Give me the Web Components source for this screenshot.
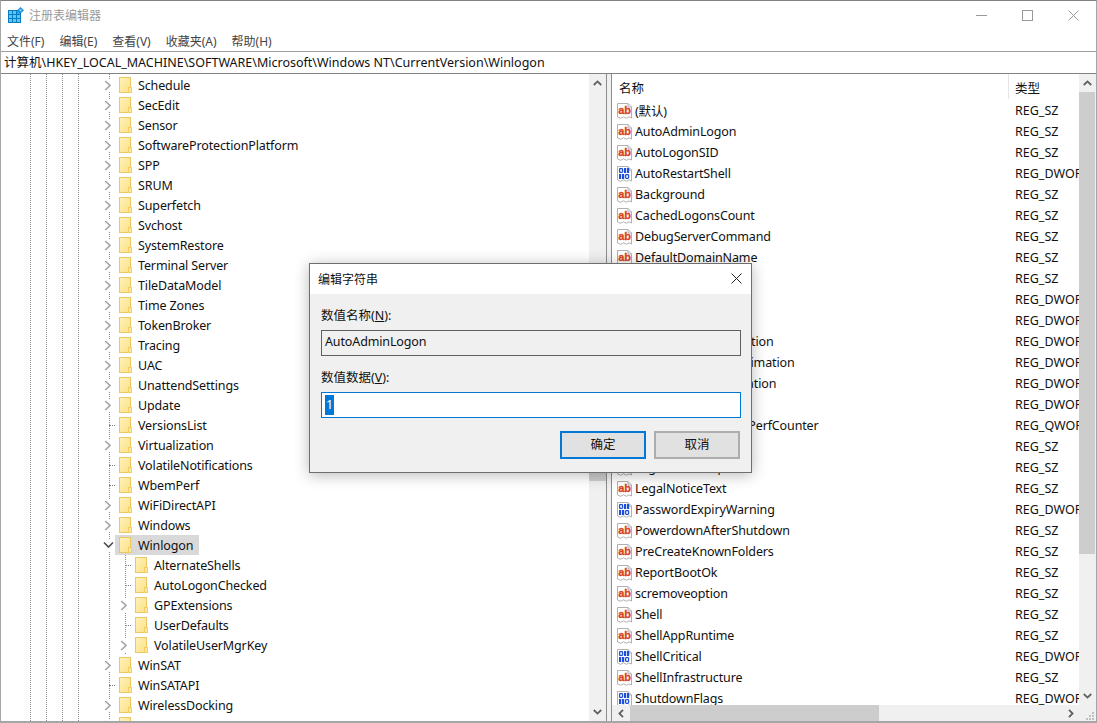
<!DOCTYPE html>
<html lang="zh">
<head>
<meta charset="utf-8">
<title>注册表编辑器</title>
<style>
    html, body {
        margin: 0;
        padding: 0;
        background: #fff;
        overflow: hidden;
    }
</style>
</head>
<body>
<reg-window></reg-window>

<script>
const FONT = `"Noto Sans", "Noto Sans CJK SC", sans-serif`;

const chevrons = {
    right: `<svg width="8" height="11" viewBox="0 0 8 11"><path d="M1.2 1 L6 5.5 L1.2 10" fill="none" stroke="#a6a6a6" stroke-width="1.7"/></svg>`,
    down: `<svg width="11" height="8" viewBox="0 0 11 8"><path d="M1 1.5 L5.5 6 L10 1.5" fill="none" stroke="#505050" stroke-width="1.7"/></svg>`,
    barUp: `<svg width="9" height="6" viewBox="0 0 9 6"><path d="M.8 5 L4.5 1.4 L8.2 5" fill="none" stroke="#606060" stroke-width="1.8"/></svg>`,
    barDown: `<svg width="9" height="6" viewBox="0 0 9 6"><path d="M.8 1 L4.5 4.6 L8.2 1" fill="none" stroke="#606060" stroke-width="1.8"/></svg>`,
    barLeft: `<svg width="6" height="9" viewBox="0 0 6 9"><path d="M5 .8 L1.4 4.5 L5 8.2" fill="none" stroke="#606060" stroke-width="1.8"/></svg>`,
    barRight: `<svg width="6" height="9" viewBox="0 0 6 9"><path d="M1 .8 L4.6 4.5 L1 8.2" fill="none" stroke="#606060" stroke-width="1.8"/></svg>`,
};

// page outline shared by the two value icons
const docOutline = `<path d="M.5 .5 H11 L14.5 4 V15 L12 13.8 L9.5 15.3 L6.5 13.8 L3.5 15.3 L.5 14 Z" fill="#fff" stroke="#b0b0b0"/><path d="M11 .5 V4 H14.5" fill="none" stroke="#b0b0b0"/>`;

// the 0 and 1 marks of the binary icon, drawn as small blocks
const bit0 = (x, y) => `<rect x="${x + 0.6}" y="${y + 0.6}" width="3" height="3.8" rx=".8" fill="none" stroke="#1d4fd8" stroke-width="1.3"/>`;
const bit1 = (x, y) => `<rect x="${x}" y="${y}" width="2.2" height="5" fill="#1d4fd8"/>`;

const valueIcons = {
    sz: `<svg width="16" height="16" viewBox="0 0 16 16">${docOutline}<text x="1.2" y="10.8" font-family="Liberation Sans" font-weight="700" font-size="11" stroke="#d9431e" stroke-width=".3" fill="#d9431e">ab</text></svg>`,
    dword: `<svg width="16" height="16" viewBox="0 0 16 16">${docOutline}${bit0(2, 2)}${bit1(7, 2)}${bit1(10, 2)}${bit1(2, 8)}${bit1(5, 8)}${bit0(8, 8)}</svg>`,
};

class ScrollBar extends HTMLElement {
    connectedCallback() {
        const horizontal = this.getAttribute("dir") === "h";
        const start = this.getAttribute("start");
        const size = this.getAttribute("size");
        this.attachShadow({ mode: "open" });
        this.shadowRoot.innerHTML = `
            <style>
                :host {
                    display: flex;
                    flex: none;
                    flex-direction: ${horizontal ? "row" : "column"};
                    background: #f0f0f0;
                    ${horizontal ? "height: 16px;" : "width: 16px;"}
                }
                .cap {
                    flex: none;
                    ${horizontal ? "width: 17px;" : "height: 18px;"}
                    display: flex;
                    align-items: center;
                    justify-content: center;
                }
                .thumb {
                    flex: none;
                    background: #cdcdcd;
                    margin-${horizontal ? "left" : "top"}: ${start}px;
                    ${horizontal ? "width" : "height"}: ${size}px;
                }
                .rest { flex: 1; }
            </style>
            <div class="cap">${horizontal ? chevrons.barLeft : chevrons.barUp}</div>
            <div class="thumb"></div>
            <div class="rest"></div>
            <div class="cap">${horizontal ? chevrons.barRight : chevrons.barDown}</div>
        `;
    }
}

class TitleBar extends HTMLElement {
    constructor() {
        super();
        this.attachShadow({ mode: "open" });
        this.shadowRoot.innerHTML = `
            <style>
                :host {
                    display: flex;
                    align-items: center;
                    height: 29px;
                    padding-left: 7px;
                    color: #9a9a9a;
                    font-size: 12px;
                }
                .name { margin-left: 5px; flex: 1; padding-bottom: 2px; }
                .btn {
                    width: 46px;
                    height: 29px;
                    display: flex;
                    align-items: center;
                    justify-content: center;
                }
            </style>
            <svg width="16" height="17" viewBox="0 0 16 17">
                <rect x="0" y="3" width="13" height="13" fill="#0a7cc4"/>
                <rect x="1" y="4" width="3" height="3" fill="#5cc6f2"/>
                <rect x="5" y="4" width="3" height="3" fill="#5cc6f2"/>
                <rect x="9" y="4" width="3" height="3" fill="#2aa0e0"/>
                <rect x="1" y="8" width="3" height="3" fill="#5cc6f2"/>
                <rect x="5" y="8" width="3" height="3" fill="#5cc6f2"/>
                <rect x="9" y="8" width="3" height="3" fill="#5cc6f2"/>
                <rect x="1" y="12" width="3" height="3" fill="#5cc6f2"/>
                <rect x="5" y="12" width="3" height="3" fill="#5cc6f2"/>
                <rect x="9" y="12" width="3" height="3" fill="#5cc6f2"/>
                <path d="M12.5 0 L16 3.2 L12.5 6.4 L9.2 3.2 Z" fill="#1a8fd6"/>
                <rect x="11.5" y="2.2" width="2" height="2" fill="#8fdcff"/>
            </svg>
            <span class="name">注册表编辑器</span>
            <div class="btn"><svg width="11" height="11" viewBox="0 0 11 11"><path d="M0 5.5 H11" stroke="#999"/></svg></div>
            <div class="btn"><svg width="11" height="11" viewBox="0 0 11 11"><rect x=".5" y=".5" width="10" height="10" fill="none" stroke="#999"/></svg></div>
            <div class="btn"><svg width="11" height="11" viewBox="0 0 11 11"><path d="M.5 .5 L10.5 10.5 M10.5 .5 L.5 10.5" stroke="#999"/></svg></div>
        `;
    }
}

class MenuBar extends HTMLElement {
    constructor() {
        super();
        this.attachShadow({ mode: "open" });
        const items = ["文件(F)", "编辑(E)", "查看(V)", "收藏夹(A)", "帮助(H)"];
        this.shadowRoot.innerHTML = `
            <style>
                :host {
                    display: flex;
                    align-items: center;
                    gap: 15px;
                    height: 21px;
                    padding-left: 6px;
                    color: #444;
                    font-size: 12px;
                }
            </style>
            ${items.map((m) => `<span>${m}</span>`).join("")}
        `;
    }
}

class AddressBar extends HTMLElement {
    constructor() {
        super();
        this.attachShadow({ mode: "open" });
        this.shadowRoot.innerHTML = `
            <style>
                :host {
                    display: flex;
                    align-items: center;
                    box-sizing: border-box;
                    height: 23px;
                    padding: 0 0 2px 3px;
                    border-top: 1px solid #a0a0a0;
                    border-bottom: 1px solid #828282;
                    font-size: 12.5px;
                    color: #111;
                }
            </style>
            <slot></slot>
        `;
    }
}

class TreeRow extends HTMLElement {
    connectedCallback() {
        const depth = Number(this.getAttribute("depth") || 0);
        const kind = this.getAttribute("kind") || "closed";
        const selected = this.hasAttribute("selected");
        let toggle = `<div class="leaf"></div>`;
        if (kind === "closed") toggle = `<div class="arrow">${chevrons.right}</div>`;
        if (kind === "open") toggle = `<div class="arrow">${chevrons.down}</div>`;

        this.attachShadow({ mode: "open" });
        this.shadowRoot.innerHTML = `
            <style>
                :host {
                    display: flex;
                    align-items: center;
                    height: 20px;
                    padding-left: ${99 + depth * 16}px;
                    ${depth ? `background: repeating-linear-gradient(to bottom, #8a8a8a 0 1px, transparent 1px 2px) 124px 0 / 1px 100% no-repeat;` : ""}
                }
                .slot {
                    flex: none;
                    width: 15px;
                    height: 20px;
                    display: flex;
                    align-items: center;
                }
                .arrow {
                    width: 15px;
                    height: 13px;
                    background: #fff;
                    display: flex;
                    align-items: center;
                    justify-content: center;
                    padding-left: 1px;
                    box-sizing: border-box;
                }
                .leaf {
                    margin-left: 9px;
                    width: 6px;
                    border-top: 1px dotted #808080;
                }
                .item {
                    display: flex;
                    align-items: center;
                    gap: 6px;
                    height: 20px;
                    padding: 0 ${selected ? 6 : 3}px 0 4px;
                    ${selected ? "background: #d9d9d9;" : ""}
                }
                svg.folder { display: block; }
            </style>
            <div class="slot">${toggle}</div>
            <div class="item">
                <svg class="folder" width="13" height="16" viewBox="0 0 13 16">
                    <defs><linearGradient id="f" x1="0" y1="0" x2="1" y2="1">
                        <stop offset="0" stop-color="#fff3b8"/><stop offset="1" stop-color="#fbdf86"/>
                    </linearGradient></defs>
                    <rect x=".5" y=".5" width="11" height="15" fill="url(#f)" stroke="#e9c763"/>
                    <rect x="9" y="10" width="4" height="6" fill="#f4cd62"/>
                    <rect x="10" y="11" width="2" height="4" fill="#fde99c"/>
                </svg>
                <span><slot></slot></span>
            </div>
        `;
    }
}

class TreePane extends HTMLElement {
    constructor() {
        super();
        this.attachShadow({ mode: "open" });
        const dots = "repeating-linear-gradient(to bottom, #8a8a8a 0 1px, transparent 1px 2px)";
        this.shadowRoot.innerHTML = `
            <style>
                :host {
                    display: flex;
                    min-width: 0;
                    width: 605px;
                    background: #fff;
                    border-right: 1px solid #8c8c8c;
                    color: #111;
                    font-size: 12.5px;
                    letter-spacing: -0.13px;
                    overflow: hidden;
                }
                .rows {
                    flex: 1;
                    min-width: 0;
                    padding-top: 1px;
                    overflow: hidden;
                    background-image: ${dots}, ${dots}, ${dots}, ${dots}, ${dots};
                    background-size: 1px 100%;
                    background-repeat: no-repeat;
                    background-position: 29px 0, 45px 0, 61px 0, 77px 0, 108px 0;
                }
            </style>
            <div class="rows"><slot></slot></div>
            <scroll-bar style="width: 17px" start="207" size="182"></scroll-bar>
        `;
    }
}

class ValueRow extends HTMLElement {
    connectedCallback() {
        const type = this.getAttribute("type");
        this.attachShadow({ mode: "open" });
        this.shadowRoot.innerHTML = `
            <style>
                :host {
                    display: flex;
                    align-items: center;
                    height: 21px;
                    flex: none;
                }
                .name {
                    flex: none;
                    padding-left: 5px;
                    display: flex;
                    align-items: center;
                    gap: 2px;
                    box-sizing: border-box;
                    width: 403px;
                    letter-spacing: -0.13px;
                }
                .type { white-space: nowrap; }
            </style>
            <div class="name">${type === "REG_SZ" ? valueIcons.sz : valueIcons.dword}<span><slot></slot></span></div>
            <div class="type">${type}</div>
        `;
    }
}

class ValuePane extends HTMLElement {
    constructor() {
        super();
        this.attachShadow({ mode: "open" });
        this.shadowRoot.innerHTML = `
            <style>
                :host {
                    flex: 1;
                    min-width: 0;
                    display: grid;
                    grid-template-columns: 1fr 16px;
                    grid-template-rows: 1fr 16px;
                    background: #fff;
                    border-left: 1px solid #8c8c8c;
                    color: #111;
                    font-size: 12.5px;
                    overflow: hidden;
                }
                .list {
                    min-width: 0;
                    min-height: 0;
                    overflow: hidden;
                    display: flex;
                    flex-direction: column;
                }
                .head {
                    flex: none;
                    height: 26px;
                    display: flex;
                }
                .head div {
                    box-sizing: border-box;
                    height: 25px;
                    line-height: 29px;
                }
                .head div:first-child {
                    width: 397px;
                    padding-left: 7px;
                    border-right: 1px solid #e5e5e5;
                }
                .head div:last-child { padding-left: 6px; }
                .grip {
                    background: #f0f0f0;
                    display: flex;
                    align-items: flex-end;
                    justify-content: flex-end;
                }
            </style>
            <div class="list">
                <div class="head"><div>名称</div><div>类型</div></div>
                <slot></slot>
            </div>
            <scroll-bar start="0" size="462"></scroll-bar>
            <scroll-bar dir="h" start="1" size="249"></scroll-bar>
            <div class="grip">
                <svg width="11" height="11" viewBox="0 0 11 11" fill="#c0c0c0">
                    <rect x="8" y="2" width="2" height="2"/><rect x="5" y="5" width="2" height="2"/><rect x="8" y="5" width="2" height="2"/>
                    <rect x="2" y="8" width="2" height="2"/><rect x="5" y="8" width="2" height="2"/><rect x="8" y="8" width="2" height="2"/>
                </svg>
            </div>
        `;
    }
}

class EditDialog extends HTMLElement {
    constructor() {
        super();
        this.attachShadow({ mode: "open" });
        this.shadowRoot.innerHTML = `
            <style>
                :host {
                    position: absolute;
                    left: 308px;
                    top: 262px;
                    width: 441px;
                    height: 208px;
                    display: flex;
                    flex-direction: column;
                    background: #f0f0f0;
                    border: 1px solid #6e6e6e;
                    box-shadow: 0 2px 14px rgba(0, 0, 0, 0.28);
                    color: #111;
                    font-size: 12.5px;
                }
                .title {
                    flex: none;
                    box-sizing: border-box;
                    height: 30px;
                    background: #fff;
                    display: flex;
                    align-items: center;
                    justify-content: space-between;
                    padding: 0 9px 1px 8px;
                    font-size: 12px;
                }
                .body {
                    flex: 1;
                    display: flex;
                    flex-direction: column;
                    padding: 0 10px 0 11px;
                }
                label { height: 20px; line-height: 20px; display: block; }
                u { text-decoration-thickness: 1px; }
                .first { margin-top: 12px; }
                .second { margin-top: 12px; }
                .field {
                    height: 24px;
                    margin-top: 4px;
                    padding-left: 3px;
                    display: flex;
                    align-items: center;
                    flex: none;
                }
                .ro { border: 1px solid #5f5f5f; letter-spacing: -0.13px; padding-bottom: 3px; height: 21px; }
                .rw { border: 1px solid #0078d7; background: #fff; }
                .sel { background: #0078d7; color: #fff; height: 20px; line-height: 20px; padding: 0 1px; }
                .buttons {
                    display: flex;
                    justify-content: flex-end;
                    gap: 8px;
                    margin-top: 13px;
                    padding-right: 1px;
                }
                .btn {
                    width: 82px;
                    height: 24px;
                    line-height: 24px;
                    text-align: center;
                    background: #e1e1e1;
                    border: 2px solid #adadad;
                }
                .btn.ok { border-color: #0078d7; }
            </style>
            <div class="title">
                <span>编辑字符串</span>
                <svg width="11" height="11" viewBox="0 0 11 11"><path d="M.5 .5 L10.5 10.5 M10.5 .5 L.5 10.5" stroke="#222"/></svg>
            </div>
            <div class="body">
                <label class="first">数值名称(<u>N</u>):</label>
                <div class="field ro">AutoAdminLogon</div>
                <label class="second">数值数据(<u>V</u>):</label>
                <div class="field rw"><span class="sel">1</span></div>
                <div class="buttons">
                    <div class="btn ok">确定</div>
                    <div class="btn">取消</div>
                </div>
            </div>
        `;
    }
}

class RegWindow extends HTMLElement {
    constructor() {
        super();
        this.attachShadow({ mode: "open" });

        // "" closed, "l" leaf, "s" open and selected, c = child of Winlogon
        const tree = [
            ["Schedule"], ["SecEdit"], ["Sensor"], ["SoftwareProtectionPlatform"], ["SPP"], ["SRUM"],
            ["Superfetch"], ["Svchost"], ["SystemRestore"], ["Terminal Server"], ["TileDataModel"],
            ["Time Zones"], ["TokenBroker"], ["Tracing"], ["UAC"], ["UnattendSettings"], ["Update"],
            ["VersionsList", "l"], ["Virtualization"], ["VolatileNotifications", "l"], ["WbemPerf", "l"],
            ["WiFiDirectAPI"], ["Windows"], ["Winlogon", "s"],
            ["AlternateShells", "cl"], ["AutoLogonChecked", "cl"], ["GPExtensions", "c"],
            ["UserDefaults", "cl"], ["VolatileUserMgrKey", "c"],
            ["WinSAT"], ["WinSATAPI", "l"], ["WirelessDocking"], [""],
        ];

        // the row under the dialog's buttons has no name: nothing of it shows
        const values = [
            ["(默认)", "REG_SZ"], ["AutoAdminLogon", "REG_SZ"], ["AutoLogonSID", "REG_SZ"],
            ["AutoRestartShell", "REG_DWORD"], ["Background", "REG_SZ"], ["CachedLogonsCount", "REG_SZ"],
            ["DebugServerCommand", "REG_SZ"], ["DefaultDomainName", "REG_SZ"], ["DefaultUserName", "REG_SZ"],
            ["DisableBackButton", "REG_DWORD"], ["DisableCAD", "REG_DWORD"], ["DisableLockWorkstation", "REG_DWORD"],
            ["EnableFirstLogonAnimation", "REG_DWORD"], ["EnableSIHostIntegration", "REG_DWORD"],
            ["ForceUnlockLogon", "REG_DWORD"], ["LastLogOffEndTimePerfCounter", "REG_QWORD"],
            ["", "REG_SZ"], ["LegalNoticeCaption", "REG_SZ"], ["LegalNoticeText", "REG_SZ"],
            ["PasswordExpiryWarning", "REG_DWORD"], ["PowerdownAfterShutdown", "REG_SZ"],
            ["PreCreateKnownFolders", "REG_SZ"], ["ReportBootOk", "REG_SZ"], ["scremoveoption", "REG_SZ"],
            ["Shell", "REG_SZ"], ["ShellAppRuntime", "REG_SZ"], ["ShellCritical", "REG_DWORD"],
            ["ShellInfrastructure", "REG_SZ"], ["ShutdownFlags", "REG_DWORD"],
        ];

        const treeHtml = tree.map(([name, f = ""]) => {
            const depth = f.includes("c") ? 1 : 0;
            const kind = f.includes("s") ? "open" : f.includes("l") ? "leaf" : "closed";
            return `<tree-row depth="${depth}" kind="${kind}"${f.includes("s") ? " selected" : ""}>${name}</tree-row>`;
        }).join("");

        const valueHtml = values.map(([name, type]) => `<value-row type="${type}">${name}</value-row>`).join("");

        this.shadowRoot.innerHTML = `
            <style>
                :host {
                    display: flex;
                    flex-direction: column;
                    box-sizing: border-box;
                    position: relative;
                    width: 1097px;
                    height: 723px;
                    overflow: hidden;
                    background: #fff;
                    border: 1px solid #a6a6a6;
                    border-bottom-width: 2px;
                    border-top-color: #808080;
                    font-family: ${FONT};
                }
                .panes {
                    flex: 1;
                    min-height: 0;
                    display: flex;
                    gap: 4px;
                    padding-right: 1px;
                    background: #f0f0f0;
                }
            </style>
            <title-bar></title-bar>
            <menu-bar></menu-bar>
            <address-bar>计算机\\HKEY_LOCAL_MACHINE\\SOFTWARE\\Microsoft\\Windows NT\\CurrentVersion\\Winlogon</address-bar>
            <div class="panes">
                <tree-pane>${treeHtml}</tree-pane>
                <value-pane>${valueHtml}</value-pane>
            </div>
            <edit-dialog></edit-dialog>
        `;
    }
}

customElements.define("scroll-bar", ScrollBar);
customElements.define("title-bar", TitleBar);
customElements.define("menu-bar", MenuBar);
customElements.define("address-bar", AddressBar);
customElements.define("tree-row", TreeRow);
customElements.define("tree-pane", TreePane);
customElements.define("value-row", ValueRow);
customElements.define("value-pane", ValuePane);
customElements.define("edit-dialog", EditDialog);
customElements.define("reg-window", RegWindow);
</script>
</body>
</html>
